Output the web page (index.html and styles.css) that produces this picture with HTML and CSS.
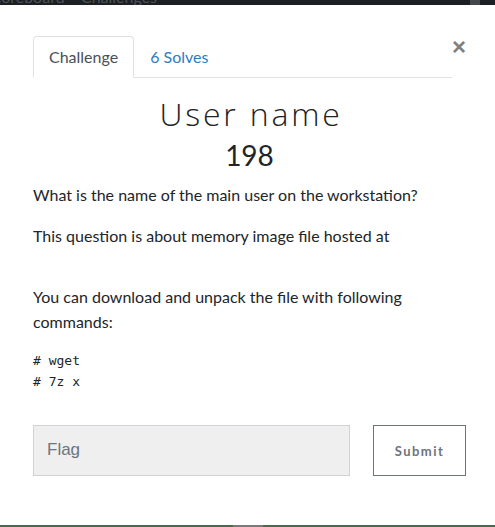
FILE: index.html
```html
<!DOCTYPE html>
<html>
<head>
<meta charset="utf-8">
<link rel="stylesheet" href="styles.css">
</head>
<body>
<div class="topbar"><span class="topbar-text">Scoreboard &nbsp;&nbsp; Challenges</span><span class="topbar-btn"></span></div>
<div class="modal">
  <div class="header">
    <ul class="tabs">
      <li class="tab active">Challenge</li>
      <li class="tab link">6 Solves</li>
    </ul>
    <span class="close">&times;</span>
  </div>
  <h2 class="title">User name</h2>
  <div class="value">198</div>
  <p class="text">What is the name of the main user on the workstation?</p>
  <p class="text">This question is about memory image file hosted at</p>
  <p class="text spacer"></p>
  <p class="text">You can download and unpack the file with following commands:</p>
  <pre class="code"># wget
# 7z x</pre>
  <div class="form">
    <div class="input">Flag</div>
    <div class="submit">Submit</div>
  </div>
</div>
<div class="bottombar"><span class="bottom-mark"></span></div>
</body>
</html>
```
FILE: styles.css
```css
html, body {
  margin: 0;
  padding: 0;
  background: #fff;
  font-family: Lato, "Noto Sans", sans-serif;
  color: #212529;
}
body {
  width: 495px;
  height: 527px;
  overflow: hidden;
  display: flex;
  flex-direction: column;
}
.topbar {
  height: 5px;
  background: #1c1f23;
  overflow: hidden;
  position: relative;
  flex: none;
}
.topbar-text {
  display: block;
  margin-top: -13px;
  margin-left: -15px;
  font-size: 16px;
  line-height: 20px;
  color: #4e5358;
  white-space: nowrap;
}
.topbar-btn {
  position: absolute;
  top: 0;
  left: 470px;
  width: 10px;
  height: 5px;
  background: #44484d;
}
.modal {
  flex: 1;
  padding: 31px 29px 0 33px;
}
.header {
  display: flex;
  align-items: flex-start;
}
.tabs {
  list-style: none;
  margin: 0;
  padding: 0;
  display: flex;
  flex: none;
  width: 419px;
  border-bottom: 1px solid #dee2e6;
}
.tab {
  padding: 8px 15px;
  font-size: 16px;
  line-height: 24px;
  border: 1px solid transparent;
  border-top-left-radius: 4px;
  border-top-right-radius: 4px;
  margin-bottom: -1px;
}
.tab.active {
  color: #495057;
  border-color: #dee2e6 #dee2e6 #fff;
  background: #fff;
}
.tab.link {
  color: #2d7cc1;
}
.close {
  margin-left: auto;
  margin-top: 1px;
  font-family: "Liberation Sans", Arial, sans-serif;
  font-size: 24px;
  font-weight: 700;
  line-height: 20px;
  color: #808080;
}
.title {
  margin: 16px 0 0;
  padding-left: 3px;
  text-align: center;
  font-family: "Open Sans", sans-serif;
  font-weight: 300;
  font-size: 32px;
  line-height: 40px;
  letter-spacing: 2.8px;
  color: #222;
}
.value {
  text-align: center;
  font-size: 28px;
  line-height: 34px;
  margin-top: 4px;
  margin-bottom: 10px;
}
.text {
  margin: 0 0 16px;
  font-size: 16px;
  line-height: 25px;
}
.spacer {
  height: 4px;
}
.code {
  margin: 0;
  font-family: "DejaVu Sans Mono", monospace;
  font-size: 13px;
  line-height: 21px;
}
.form {
  display: flex;
  gap: 23px;
  margin-top: 33px;
}
.input {
  box-sizing: border-box;
  width: 317px;
  height: 51px;
  background: #efefef;
  border: 1px solid #cfd3d7;
  padding: 0 13px;
  font-family: "Liberation Sans", Arial, sans-serif;
  font-size: 17px;
  line-height: 47px;
  color: #6c757d;
}
.submit {
  box-sizing: border-box;
  width: 93px;
  height: 51px;
  border: 1px solid #6c757d;
  display: flex;
  align-items: center;
  justify-content: center;
  font-family: Lato, sans-serif;
  font-weight: 700;
  font-size: 13px;
  letter-spacing: 1.5px;
  color: #6c757d;
}
.bottombar {
  height: 2px;
  flex: none;
  background: #4a6a4a;
  position: relative;
}
.bottom-mark {
  position: absolute;
  left: 233px;
  width: 30px;
  top: 0;
  height: 2px;
  background: #7a7a7a;
}
```
